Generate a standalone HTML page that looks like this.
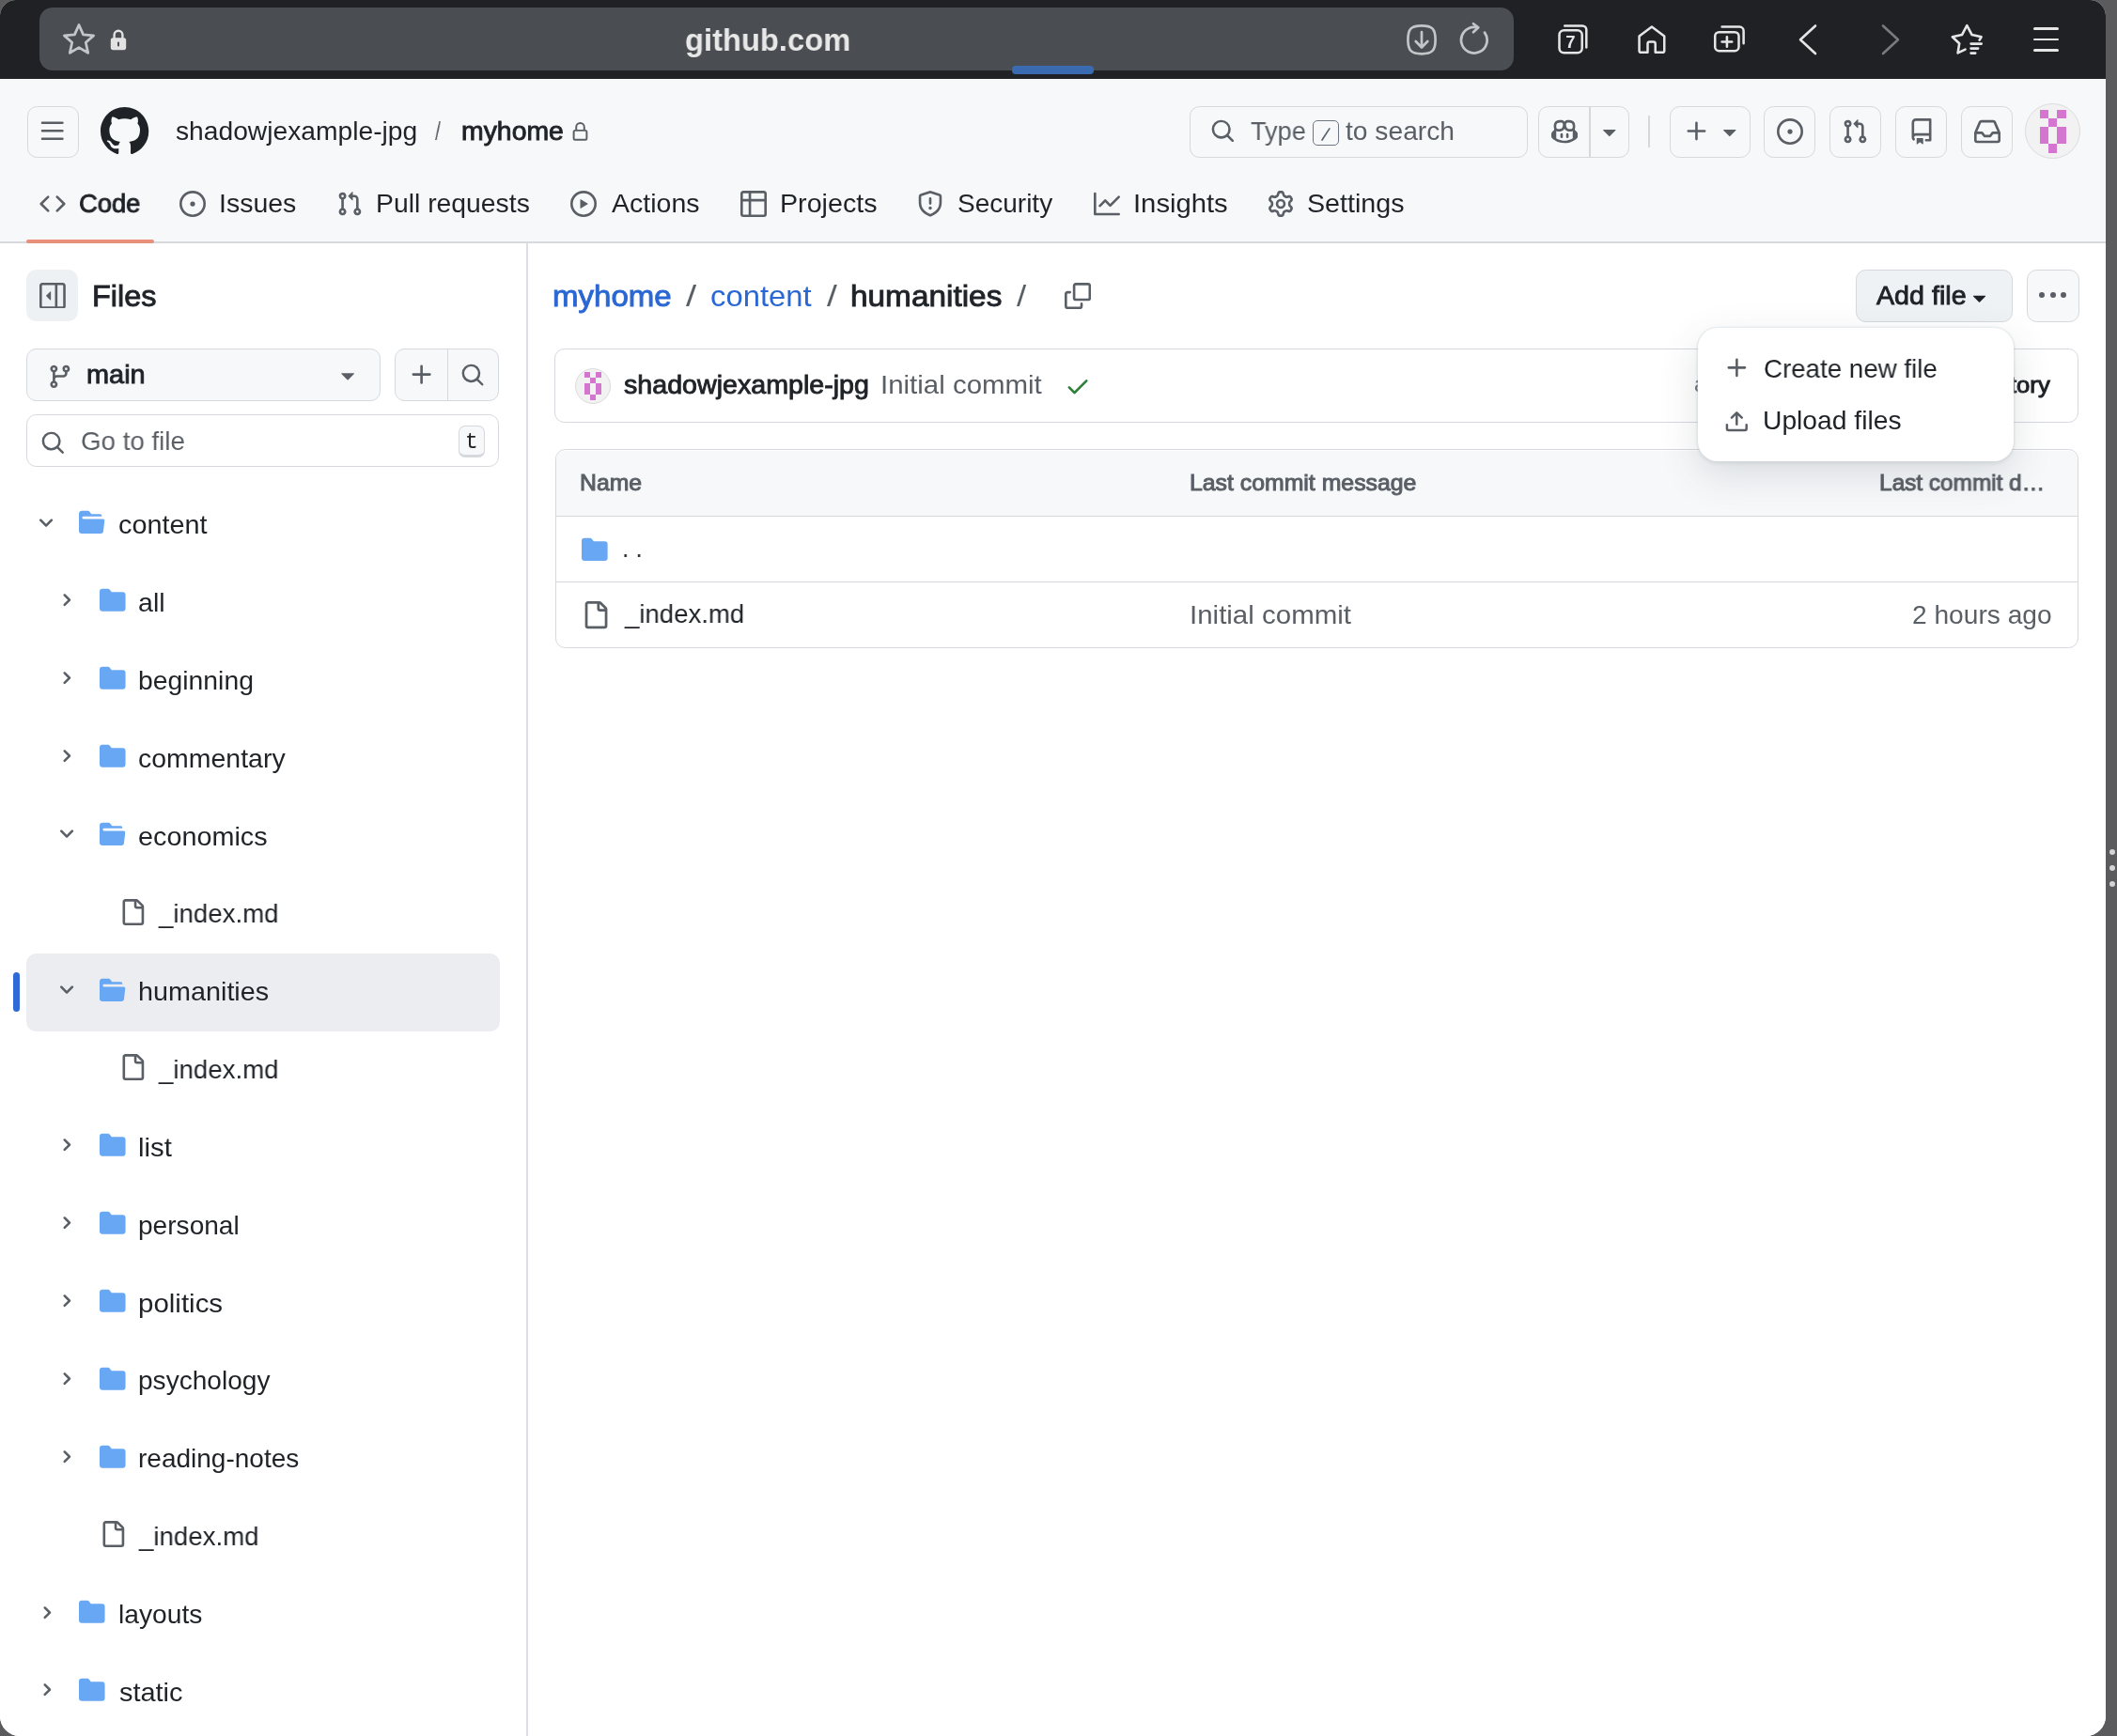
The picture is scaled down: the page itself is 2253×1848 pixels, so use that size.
<!DOCTYPE html>
<html><head><meta charset="utf-8"><style>
html,body{margin:0;padding:0}
body{width:2253px;height:1848px;overflow:hidden;background:#5b5b5d;position:relative;font-family:"Liberation Sans",sans-serif}
#frame{position:absolute;left:0;top:0;width:2241px;height:1848px;border-radius:17px 17px 21px 21px;overflow:hidden;background:#fff}
</style></head><body>
<div id="frame">
<div style='position:absolute;left:0.00px;top:0.00px;width:2241.00px;height:83.50px;background:#1f2125'></div><div style='position:absolute;left:42.00px;top:8.00px;width:1569.00px;height:67.00px;background:#4a4d51;border-radius:14px'></div><svg style='position:absolute;left:62px;top:21px' width='44' height='42' viewBox='0 0 44 42'><path d='M22 5.5 L26.6 15.9 L37.6 16.9 L29.3 24.3 L31.7 35.3 L22 29.6 L12.3 35.3 L14.7 24.3 L6.4 16.9 L17.4 15.9 Z' fill='none' stroke='#c3c5c8' stroke-width='2.8' stroke-linejoin='round'/></svg><svg style='position:absolute;left:117px;top:30px' width='18' height='24' viewBox='0 0 18 24'><path d='M4.6 11 V7.2 a4.4 4.4 0 0 1 8.8 0 V11' fill='none' stroke='#e2e2e2' stroke-width='2.4'/><rect x='0.8' y='10.2' width='16.4' height='13' rx='2.6' fill='#e2e2e2'/><rect x='8' y='14.5' width='2' height='5' rx='1' fill='#4a4d52'/></svg><svg style='position:absolute;left:1496px;top:25px' width='34' height='35' viewBox='0 0 34 35'><path d='M17 2.4 C28 2.4 31.6 5.5 31.6 17.2 C31.6 29 28 32.3 17 32.3 C6 32.3 2.4 29 2.4 17.2 C2.4 5.5 6 2.4 17 2.4Z' fill='none' stroke='#c3c6c9' stroke-width='2.7'/><path d='M17 9 V25.3 M10.7 19 L17 25.5 L23.3 19' fill='none' stroke='#c3c6c9' stroke-width='2.7' stroke-linecap='round' stroke-linejoin='round'/></svg><svg style='position:absolute;left:1553px;top:23px' width='34' height='36' viewBox='0 0 34 36'><path d='M27 11.6 A13.8 13.8 0 1 1 15.9 5.9 L19.5 6.1' fill='none' stroke='#c3c6c9' stroke-width='2.7' stroke-linecap='round'/><path d='M15 2.2 L20.3 6.3 L15 11.3' fill='none' stroke='#c3c6c9' stroke-width='2.7' stroke-linecap='round' stroke-linejoin='round'/></svg><div style='position:absolute;left:1076.70px;top:70.40px;width:87.30px;height:8.20px;background:#3a6bb0;border-radius:4px'></div><svg style='position:absolute;left:1656px;top:25px;will-change:transform' width='36' height='35' viewBox='0 0 36 35'><path d='M9.2 2.4 H28 a4.3 4.3 0 0 1 4.3 4.3 V25.6' fill='none' stroke='#e6e6e6' stroke-width='2.5' stroke-linecap='round'/><rect x='3.5' y='7.2' width='24.2' height='24.1' rx='5' fill='none' stroke='#e6e6e6' stroke-width='2.5'/><text x='15.4' y='26.1' font-family='Liberation Sans' font-weight='700' font-size='18.5' fill='#e6e6e6' text-anchor='middle'>7</text></svg><svg style='position:absolute;left:1741px;top:25px' width='34' height='34' viewBox='0 0 34 34'><path d='M3.55 13.6 L16.9 3.45 L30.25 13.6 V28.9 a1.85 1.85 0 0 1 -1.85 1.85 H20.7 V21.5 a2.1 2.1 0 0 0 -2.1 -2.1 H14.6 a2.1 2.1 0 0 0 -2.1 2.1 V30.75 H5.4 a1.85 1.85 0 0 1 -1.85 -1.85 Z' fill='none' stroke='#e6e6e6' stroke-width='2.5' stroke-linejoin='round'/></svg><svg style='position:absolute;left:1822px;top:25px' width='38' height='33' viewBox='0 0 38 33'><path d='M10.6 3.6 H29.3 a4.3 4.3 0 0 1 4.3 4.3 V21.3' fill='none' stroke='#e6e6e6' stroke-width='2.5' stroke-linecap='round'/><rect x='3.2' y='9.2' width='25.3' height='20' rx='4.3' fill='none' stroke='#e6e6e6' stroke-width='2.5'/><path d='M15.9 14.2 V24.8 M10.6 19.5 H21.2' stroke='#e6e6e6' stroke-width='2.6' stroke-linecap='round'/></svg><svg style='position:absolute;left:1912px;top:25px' width='24' height='35' viewBox='0 0 24 35'><path d='M20 2.5 L4 17.2 L20 32' fill='none' stroke='#e6e6e6' stroke-width='2.6' stroke-linecap='round' stroke-linejoin='round'/></svg><svg style='position:absolute;left:2000px;top:25px' width='24' height='35' viewBox='0 0 24 35'><path d='M4 2.5 L20 17.2 L4 32' fill='none' stroke='#7a7b7e' stroke-width='2.6' stroke-linecap='round' stroke-linejoin='round'/></svg><svg style='position:absolute;left:2075px;top:24px' width='38' height='36' viewBox='0 0 38 36'><path d='M16.5 28.6 L8.6 32.4 L10.2 22.3 L2.8 15.3 L13 13.1 L18.3 3.2 L23.6 13.1 L33.6 15.3 L31.6 18.6' fill='none' stroke='#e6e6e6' stroke-width='2.6' stroke-linejoin='round' stroke-linecap='round'/><path d='M22.6 22.6 H33.7 M22.6 27.6 H30.1 M22.6 32.6 H27.2' stroke='#e6e6e6' stroke-width='2.7' stroke-linecap='round'/></svg><div style='position:absolute;left:2164.30px;top:28.95px;width:26.60px;height:2.90px;background:#e6e6e6;border-radius:2px'></div><div style='position:absolute;left:2164.30px;top:40.55px;width:26.60px;height:2.90px;background:#e6e6e6;border-radius:2px'></div><div style='position:absolute;left:2164.30px;top:51.95px;width:26.60px;height:2.90px;background:#e6e6e6;border-radius:2px'></div><div style='position:absolute;left:0.00px;top:83.50px;width:2241.00px;height:173.50px;background:#f6f8fa'></div><div style='position:absolute;left:0.00px;top:257.00px;width:2241.00px;height:2.00px;background:#d6d9dd'></div><div style='position:absolute;left:28.50px;top:112.50px;width:55.00px;height:55.00px;box-sizing:border-box;border:1.75px solid #d5d8dc;border-radius:10.5px;background:transparent;'></div><svg style='position:absolute;left:42.29px;top:126.07px;' width='27.42' height='27.42' viewBox='0 0 16 16' fill='#5a5f66'><path d='M1 2.75A.75.75 0 0 1 1.75 2h12.5a.75.75 0 0 1 0 1.5H1.75A.75.75 0 0 1 1 2.75Zm0 5A.75.75 0 0 1 1.75 7h12.5a.75.75 0 0 1 0 1.5H1.75A.75.75 0 0 1 1 7.75ZM1.75 12h12.5a.75.75 0 0 1 0 1.5H1.75a.75.75 0 0 1 0-1.5Z'/></svg><svg style='position:absolute;left:107.48px;top:114.22px;' width='51.25' height='51.25' viewBox='0 0 16 16' fill='#1f2328'><path d='M8 0c4.42 0 8 3.58 8 8a8.013 8.013 0 0 1-5.45 7.59c-.4.08-.55-.17-.55-.38 0-.27.01-1.13.01-2.2 0-.75-.25-1.23-.54-1.48 1.78-.2 3.65-.88 3.65-3.95 0-.88-.31-1.59-.82-2.15.08-.2.36-1.02-.08-2.12 0 0-.67-.22-2.2.82-.64-.18-1.32-.27-2-.27-.68 0-1.36.09-2 .27-1.53-1.03-2.2-.82-2.2-.82-.44 1.1-.16 1.92-.08 2.12-.51.56-.82 1.28-.82 2.15 0 3.06 1.86 3.75 3.64 3.95-.23.2-.44.55-.51 1.07-.46.21-1.61.55-2.33-.66-.15-.24-.6-.83-1.23-.82-.67.01-.27.38.01.53.34.19.73.9.82 1.13.16.45.68 1.31 2.69.94 0 .67.01 1.3.01 1.49 0 .21-.15.45-.55.38A7.995 7.995 0 0 1 0 8c0-4.42 3.58-8 8-8Z'/></svg><svg style='position:absolute;left:607.24px;top:129.74px;' width='21.03' height='21.03' viewBox='0 0 16 16' fill='#5a5f66'><path d='M4 4a4 4 0 0 1 8 0v2h.25c.966 0 1.75.784 1.75 1.75v5.5A1.75 1.75 0 0 1 12.25 15h-8.5A1.75 1.75 0 0 1 2 13.25v-5.5C2 6.784 2.784 6 3.75 6H4Zm8.25 3.5h-8.5a.25.25 0 0 0-.25.25v5.5c0 .138.112.25.25.25h8.5a.25.25 0 0 0 .25-.25v-5.5a.25.25 0 0 0-.25-.25ZM10.5 6V4a2.5 2.5 0 1 0-5 0v2Z'/></svg><div style='position:absolute;left:1266.00px;top:112.50px;width:360.00px;height:55.00px;box-sizing:border-box;border:1.75px solid #d5d8dc;border-radius:10.5px;background:transparent;'></div><svg style='position:absolute;left:1287.95px;top:126.00px;' width='26.76' height='26.76' viewBox='0 0 16 16' fill='#5a5f66'><path d='M10.68 11.74a6 6 0 0 1-7.922-8.982 6 6 0 0 1 8.982 7.922l3.04 3.04a.749.749 0 0 1-.326 1.275.749.749 0 0 1-.734-.215ZM11.5 7a4.499 4.499 0 1 0-8.997 0A4.499 4.499 0 0 0 11.5 7Z'/></svg><div style='position:absolute;left:1397.00px;top:128.20px;width:27.80px;height:27.10px;box-sizing:border-box;border:1.5px solid #6e7781;border-radius:5px'></div><svg style='position:absolute;left:1397px;top:128px' width='28' height='27' viewBox='0 0 28 27'><path d='M10 21 L17.9 8.9' stroke='#59636e' stroke-width='1.7' stroke-linecap='round'/></svg><div style='position:absolute;left:1637.30px;top:112.50px;width:97.20px;height:55.00px;box-sizing:border-box;border:1.75px solid #d5d8dc;border-radius:10.5px;background:transparent;'></div><div style='position:absolute;left:1691.20px;top:112.50px;width:1.80px;height:55.00px;background:#d5d8dc'></div><svg style='position:absolute;left:1650.73px;top:126.05px;' width='28.04' height='28.04' viewBox='0 0 16 16' fill='#5a5f66'><path d='M7.998 15.035c-4.562 0-7.873-2.914-7.998-3.749V9.338c.085-.628.677-1.686 1.588-2.065.013-.07.024-.143.036-.218.029-.183.06-.384.126-.612-.201-.508-.254-1.084-.254-1.656 0-.87.128-1.769.693-2.484.579-.733 1.494-1.124 2.724-1.261 1.206-.134 2.262.034 2.944.765.05.053.096.108.139.165.044-.057.094-.112.143-.165.682-.731 1.738-.899 2.944-.765 1.23.137 2.145.528 2.724 1.261.566.715.693 1.614.693 2.484 0 .572-.053 1.148-.254 1.656.066.228.098.429.126.612.012.076.024.148.037.218.924.385 1.522 1.471 1.591 2.095v1.872c0 .766-3.351 3.795-8.002 3.795Zm0-1.485c2.28 0 4.584-1.11 5.002-1.433V7.862l-.023-.116c-.49.21-1.075.291-1.727.291-1.146 0-2.059-.327-2.71-.991A3.222 3.222 0 0 1 8 6.303a3.24 3.24 0 0 1-.544.743c-.65.664-1.563.991-2.71.991-.652 0-1.236-.081-1.727-.291l-.023.116v4.255c.419.323 2.722 1.433 5.002 1.433ZM6.762 2.83c-.193-.206-.637-.413-1.682-.297-1.019.113-1.479.404-1.713.7-.247.312-.369.789-.369 1.554 0 .793.129 1.171.308 1.371.162.181.519.379 1.442.379.853 0 1.339-.235 1.638-.54.315-.322.527-.827.617-1.553.117-.935-.037-1.395-.241-1.614Zm4.155-.297c-1.044-.116-1.488.091-1.681.297-.204.219-.359.679-.242 1.614.091.726.303 1.231.618 1.553.299.305.784.54 1.638.54.922 0 1.28-.198 1.442-.379.179-.2.308-.578.308-1.371 0-.765-.123-1.242-.37-1.554-.233-.296-.693-.587-1.713-.7Z M6.25 9.037a.75.75 0 0 1 .75.75v1.501a.75.75 0 0 1-1.5 0V9.787a.75.75 0 0 1 .75-.75Zm4.25.75v1.501a.75.75 0 0 1-1.5 0V9.787a.75.75 0 0 1 1.5 0Z'/></svg><svg style='position:absolute;left:1697.88px;top:125.12px;' width='29.55' height='29.55' viewBox='0 0 16 16' fill='#5a5f66'><path d='m4.427 7.427 3.396 3.396a.25.25 0 0 0 .354 0l3.396-3.396A.25.25 0 0 0 11.396 7H4.604a.25.25 0 0 0-.177.427Z'/></svg><div style='position:absolute;left:1754.00px;top:123.30px;width:2.00px;height:34.00px;background:#d5d8dc'></div><div style='position:absolute;left:1777.00px;top:112.50px;width:85.50px;height:55.00px;box-sizing:border-box;border:1.75px solid #d5d8dc;border-radius:10.5px;background:transparent;'></div><svg style='position:absolute;left:1792.11px;top:126.16px;' width='27.76' height='27.76' viewBox='0 0 16 16' fill='#5a5f66'><path d='M7.75 2a.75.75 0 0 1 .75.75V7h4.25a.75.75 0 0 1 0 1.5H8.5v4.25a.75.75 0 0 1-1.5 0V8.5H2.75a.75.75 0 0 1 0-1.5H7V2.75A.75.75 0 0 1 7.75 2Z'/></svg><svg style='position:absolute;left:1825.88px;top:125.12px;' width='29.55' height='29.55' viewBox='0 0 16 16' fill='#5a5f66'><path d='m4.427 7.427 3.396 3.396a.25.25 0 0 0 .354 0l3.396-3.396A.25.25 0 0 0 11.396 7H4.604a.25.25 0 0 0-.177.427Z'/></svg><div style='position:absolute;left:1877.00px;top:112.50px;width:55.40px;height:55.00px;box-sizing:border-box;border:1.75px solid #d5d8dc;border-radius:10.5px;background:transparent;'></div><svg style='position:absolute;left:1890.70px;top:126.00px;' width='28.00' height='28.00' viewBox='0 0 16 16' fill='#5a5f66'><path d='M8 9.5a1.5 1.5 0 1 0 0-3 1.5 1.5 0 0 0 0 3Z M8 0a8 8 0 1 1 0 16A8 8 0 0 1 8 0ZM1.5 8a6.5 6.5 0 1 0 13 0 6.5 6.5 0 0 0-13 0Z'/></svg><div style='position:absolute;left:1947.30px;top:112.50px;width:54.90px;height:55.00px;box-sizing:border-box;border:1.75px solid #d5d8dc;border-radius:10.5px;background:transparent;'></div><svg style='position:absolute;left:1960.31px;top:126.35px;' width='28.00' height='28.00' viewBox='0 0 16 16' fill='#5a5f66'><path d='M1.5 3.25a2.25 2.25 0 1 1 3 2.122v5.256a2.251 2.251 0 1 1-1.5 0V5.372A2.25 2.25 0 0 1 1.5 3.25Zm5.677-.177L9.573.677A.25.25 0 0 1 10 .854V2.5h1A2.5 2.5 0 0 1 13.5 5v5.628a2.251 2.251 0 1 1-1.5 0V5a1 1 0 0 0-1-1h-1v1.646a.25.25 0 0 1-.427.177L7.177 3.427a.25.25 0 0 1 0-.354ZM3.75 2.5a.75.75 0 1 0 0 1.5.75.75 0 0 0 0-1.5Zm0 9.5a.75.75 0 1 0 0 1.5.75.75 0 0 0 0-1.5Zm8.25.75a.75.75 0 1 0 1.5 0 .75.75 0 0 0-1.5 0Z'/></svg><div style='position:absolute;left:2017.40px;top:112.50px;width:54.90px;height:55.00px;box-sizing:border-box;border:1.75px solid #d5d8dc;border-radius:10.5px;background:transparent;'></div><svg style='position:absolute;left:2030.85px;top:126.22px;' width='28.00' height='28.00' viewBox='0 0 16 16' fill='#5a5f66'><path d='M2 2.5A2.5 2.5 0 0 1 4.5 0h8.75a.75.75 0 0 1 .75.75v12.5a.75.75 0 0 1-.75.75h-2.5a.75.75 0 0 1 0-1.5h1.75v-2h-8a1 1 0 0 0-.714 1.7.75.75 0 1 1-1.072 1.05A2.495 2.495 0 0 1 2 11.5Zm10.5-1h-8a1 1 0 0 0-1 1v6.708A2.486 2.486 0 0 1 4.5 9h8ZM5 12.25a.25.25 0 0 1 .25-.25h3.5a.25.25 0 0 1 .25.25v3.25a.25.25 0 0 1-.4.2l-1.45-1.087a.249.249 0 0 0-.3 0L5.4 15.7a.25.25 0 0 1-.4-.2Z'/></svg><div style='position:absolute;left:2087.40px;top:112.50px;width:54.90px;height:55.00px;box-sizing:border-box;border:1.75px solid #d5d8dc;border-radius:10.5px;background:transparent;'></div><svg style='position:absolute;left:2100.85px;top:126.00px;' width='28.00' height='28.00' viewBox='0 0 16 16' fill='#5a5f66'><path d='M2.8 2.06A1.75 1.75 0 0 1 4.41 1h7.18c.7 0 1.333.417 1.61 1.06l2.74 6.395c.04.093.06.194.06.295v4.5A1.75 1.75 0 0 1 14.25 15H1.75A1.75 1.75 0 0 1 0 13.25v-4.5c0-.101.02-.202.06-.295Zm1.61.44a.25.25 0 0 0-.23.152L1.887 8H4.75a.75.75 0 0 1 .6.3L6.625 10h2.75l1.275-1.7a.75.75 0 0 1 .6-.3h2.863L11.82 2.652a.25.25 0 0 0-.23-.152Zm10.09 7h-2.875l-1.275 1.7a.75.75 0 0 1-.6.3h-3.5a.75.75 0 0 1-.6-.3L4.375 9.5H1.5v3.75c0 .138.112.25.25.25h12.5a.25.25 0 0 0 .25-.25Z'/></svg><div style='position:absolute;left:2155.45px;top:110.35px;width:58.50px;height:58.50px;box-sizing:border-box;background:#f2f2f2;border:1.5px solid #dcdcdc;border-radius:50%'></div><div style='position:absolute;left:2170.86px;top:116.53px;width:9.23px;height:9.23px;background:#d476cf'></div><div style='position:absolute;left:2189.31px;top:116.53px;width:9.23px;height:9.23px;background:#d476cf'></div><div style='position:absolute;left:2180.09px;top:125.76px;width:9.23px;height:9.23px;background:#d476cf'></div><div style='position:absolute;left:2170.86px;top:134.99px;width:9.23px;height:9.23px;background:#d476cf'></div><div style='position:absolute;left:2189.31px;top:134.99px;width:9.23px;height:9.23px;background:#d476cf'></div><div style='position:absolute;left:2170.86px;top:144.21px;width:9.23px;height:9.23px;background:#d476cf'></div><div style='position:absolute;left:2189.31px;top:144.21px;width:9.23px;height:9.23px;background:#d476cf'></div><div style='position:absolute;left:2180.09px;top:153.44px;width:9.23px;height:9.23px;background:#d476cf'></div><svg style='position:absolute;left:41.65px;top:202.80px;' width='28.00' height='28.00' viewBox='0 0 16 16' fill='#5a5f66'><path d='m11.28 3.22 4.25 4.25a.75.75 0 0 1 0 1.06l-4.25 4.25a.749.749 0 0 1-1.275-.326.749.749 0 0 1 .215-.734L13.94 8l-3.72-3.72a.749.749 0 0 1 .326-1.275.749.749 0 0 1 .734.215Zm-6.56 0a.751.751 0 0 1 1.042.018.751.751 0 0 1 .018 1.042L2.06 8l3.72 3.72a.749.749 0 0 1-.326 1.275.749.749 0 0 1-.734-.215L.47 8.53a.75.75 0 0 1 0-1.06Z'/></svg><svg style='position:absolute;left:190.90px;top:202.80px;' width='28.00' height='28.00' viewBox='0 0 16 16' fill='#5a5f66'><path d='M8 9.5a1.5 1.5 0 1 0 0-3 1.5 1.5 0 0 0 0 3Z M8 0a8 8 0 1 1 0 16A8 8 0 0 1 8 0ZM1.5 8a6.5 6.5 0 1 0 13 0 6.5 6.5 0 0 0-13 0Z'/></svg><svg style='position:absolute;left:358.06px;top:203.15px;' width='28.00' height='28.00' viewBox='0 0 16 16' fill='#5a5f66'><path d='M1.5 3.25a2.25 2.25 0 1 1 3 2.122v5.256a2.251 2.251 0 1 1-1.5 0V5.372A2.25 2.25 0 0 1 1.5 3.25Zm5.677-.177L9.573.677A.25.25 0 0 1 10 .854V2.5h1A2.5 2.5 0 0 1 13.5 5v5.628a2.251 2.251 0 1 1-1.5 0V5a1 1 0 0 0-1-1h-1v1.646a.25.25 0 0 1-.427.177L7.177 3.427a.25.25 0 0 1 0-.354ZM3.75 2.5a.75.75 0 1 0 0 1.5.75.75 0 0 0 0-1.5Zm0 9.5a.75.75 0 1 0 0 1.5.75.75 0 0 0 0-1.5Zm8.25.75a.75.75 0 1 0 1.5 0 .75.75 0 0 0-1.5 0Z'/></svg><svg style='position:absolute;left:606.75px;top:202.80px;' width='28.00' height='28.00' viewBox='0 0 16 16' fill='#5a5f66'><path d='M8 0a8 8 0 1 1 0 16A8 8 0 0 1 8 0ZM1.5 8a6.5 6.5 0 1 0 13 0 6.5 6.5 0 0 0-13 0Zm4.879-2.773 4.264 2.559a.25.25 0 0 1 0 .428l-4.264 2.559A.25.25 0 0 1 6 10.559V5.442a.25.25 0 0 1 .379-.215Z'/></svg><svg style='position:absolute;left:787.80px;top:202.80px;' width='28.00' height='28.00' viewBox='0 0 16 16' fill='#5a5f66'><path d='M0 1.75C0 .784.784 0 1.75 0h12.5C15.216 0 16 .784 16 1.75v12.5A1.75 1.75 0 0 1 14.25 16H1.75A1.75 1.75 0 0 1 0 14.25ZM6.5 6.5v8h7.75a.25.25 0 0 0 .25-.25V6.5Zm8-1.5V1.75a.25.25 0 0 0-.25-.25H6.5V5Zm-13 1.5v7.75c0 .138.112.25.25.25H5v-8ZM5 5V1.5H1.75a.25.25 0 0 0-.25.25V5Z'/></svg><svg style='position:absolute;left:975.65px;top:203.06px;' width='28.00' height='28.00' viewBox='0 0 16 16' fill='#5a5f66'><path d='M7.467.133a1.748 1.748 0 0 1 1.066 0l5.25 1.68A1.75 1.75 0 0 1 15 3.48V7c0 1.566-.32 3.182-1.303 4.682-.983 1.498-2.585 2.813-5.032 3.855a1.697 1.697 0 0 1-1.33 0c-2.447-1.042-4.049-2.357-5.032-3.855C1.32 10.182 1 8.566 1 7V3.48a1.755 1.755 0 0 1 1.217-1.667Zm.61 1.429a.25.25 0 0 0-.153 0l-5.25 1.68a.25.25 0 0 0-.174.238V7c0 1.358.275 2.666 1.057 3.86.784 1.194 2.121 2.34 4.366 3.297a.196.196 0 0 0 .154 0c2.245-.956 3.582-2.104 4.366-3.298C13.225 9.666 13.5 8.36 13.5 7V3.48a.251.251 0 0 0-.174-.237l-5.25-1.68ZM8.75 4.75v3a.75.75 0 0 1-1.5 0v-3a.75.75 0 0 1 1.5 0ZM9 10.5a1 1 0 1 1-2 0 1 1 0 0 1 2 0Z'/></svg><svg style='position:absolute;left:1163.80px;top:202.80px;' width='28.00' height='28.00' viewBox='0 0 16 16' fill='#5a5f66'><path d='M1.5 1.75V13.5h13.75a.75.75 0 0 1 0 1.5H.75a.75.75 0 0 1-.75-.75V1.75a.75.75 0 0 1 1.5 0Zm14.28 2.53-5.25 5.25a.75.75 0 0 1-1.06 0L7 7.06 4.28 9.78a.751.751 0 0 1-1.042-.018.751.751 0 0 1-.018-1.042l3.25-3.25a.75.75 0 0 1 1.06 0L10 7.94l4.72-4.72a.751.751 0 0 1 1.042.018.751.751 0 0 1 .018 1.042Z'/></svg><svg style='position:absolute;left:1348.50px;top:202.80px;' width='28.00' height='28.00' viewBox='0 0 16 16' fill='#5a5f66'><path d='M8 0a8.2 8.2 0 0 1 .701.031C9.444.095 9.99.645 10.16 1.29l.288 1.107c.018.066.079.158.212.224.231.114.454.243.668.386.123.082.233.09.299.071l1.103-.303c.644-.176 1.392.021 1.82.63.27.385.506.792.704 1.218.315.675.111 1.422-.364 1.891l-.814.806c-.049.048-.098.147-.088.294.016.257.016.515 0 .772-.01.147.038.246.088.294l.814.806c.475.469.679 1.216.364 1.891a7.977 7.977 0 0 1-.704 1.217c-.428.61-1.176.807-1.82.63l-1.102-.302c-.067-.019-.177-.011-.3.071a5.909 5.909 0 0 1-.668.386c-.133.066-.194.158-.211.224l-.29 1.106c-.168.646-.715 1.196-1.458 1.26a8.006 8.006 0 0 1-1.402 0c-.743-.064-1.289-.614-1.458-1.26l-.289-1.106c-.018-.066-.079-.158-.212-.224a5.738 5.738 0 0 1-.668-.386c-.123-.082-.233-.09-.299-.071l-1.103.303c-.644.176-1.392-.021-1.82-.63a8.12 8.12 0 0 1-.704-1.218c-.315-.675-.111-1.422.363-1.891l.815-.806c.05-.048.098-.147.088-.294a6.214 6.214 0 0 1 0-.772c.01-.147-.038-.246-.088-.294l-.815-.806C.635 6.045.431 5.298.746 4.623a7.92 7.92 0 0 1 .704-1.217c.428-.61 1.176-.807 1.82-.63l1.102.302c.067.019.177.011.3-.071.214-.143.437-.272.668-.386.133-.066.194-.158.211-.224l.29-1.106C6.009.645 6.556.095 7.299.03 7.53.01 7.764 0 8 0Zm-.571 1.525c-.036.003-.108.036-.137.146l-.289 1.105c-.147.561-.549.967-.998 1.189-.173.086-.34.183-.5.29-.417.278-.97.423-1.529.27l-1.103-.303c-.109-.03-.175.016-.195.045-.22.312-.412.644-.573.99-.014.031-.021.11.059.19l.815.806c.411.406.562.957.53 1.456a4.709 4.709 0 0 0 0 .582c.032.499-.119 1.05-.53 1.456l-.815.806c-.081.08-.073.159-.059.19.162.346.353.677.573.989.02.03.085.076.195.046l1.102-.303c.56-.153 1.113-.008 1.53.27.161.107.328.204.501.29.447.222.85.629.997 1.189l.289 1.105c.029.109.101.143.137.146a6.6 6.6 0 0 0 1.142 0c.036-.003.108-.036.137-.146l.289-1.105c.147-.561.549-.967.998-1.189.173-.086.34-.183.5-.29.417-.278.97-.423 1.529-.27l1.103.303c.109.029.175-.016.195-.045.22-.313.411-.644.573-.99.014-.031.021-.11-.059-.19l-.815-.806c-.411-.406-.562-.957-.53-1.456a4.709 4.709 0 0 0 0-.582c-.032-.499.119-1.05.53-1.456l.815-.806c.081-.08.073-.159.059-.19a6.464 6.464 0 0 0-.573-.989c-.02-.03-.085-.076-.195-.046l-1.102.303c-.56.153-1.113.008-1.53-.27a4.44 4.44 0 0 0-.501-.29c-.447-.222-.85-.629-.997-1.189l-.289-1.105c-.029-.11-.101-.143-.137-.146a6.6 6.6 0 0 0-1.142 0ZM11 8a3 3 0 1 1-6 0 3 3 0 0 1 6 0ZM9.5 8a1.5 1.5 0 1 0-3.001.001A1.5 1.5 0 0 0 9.5 8Z'/></svg><div style='position:absolute;left:27.70px;top:255.00px;width:136.10px;height:4.00px;background:#e8907a;border-radius:2px'></div><div style='position:absolute;left:0.00px;top:259.00px;width:2241.00px;height:1589.00px;background:#ffffff'></div><div style='position:absolute;left:560.00px;top:259.00px;width:2.00px;height:1589.00px;background:#dcdfe3'></div><div style='position:absolute;left:28.30px;top:287.30px;width:55.20px;height:55.20px;background:#eef1f4;border-radius:10.5px'></div><svg style='position:absolute;left:41.93px;top:300.57px;' width='27.85' height='27.85' viewBox='0 0 16 16' fill='#5a5f66'><path d='M4.177 7.823 6.573 5.427A.25.25 0 0 1 7 5.604v4.792a.25.25 0 0 1-.427.177L4.177 8.177a.25.25 0 0 1 0-.354Z M1.75 0h12.5C15.216 0 16 .784 16 1.75v12.5A1.75 1.75 0 0 1 14.25 16H1.75A1.75 1.75 0 0 1 0 14.25V1.75C0 .784.784 0 1.75 0ZM1.5 1.75v12.5c0 .138.112.25.25.25H9.5v-13H1.75a.25.25 0 0 0-.25.25ZM11 14.5h3.25a.25.25 0 0 0 .25-.25V1.75a.25.25 0 0 0-.25-.25H11Z'/></svg><div style='position:absolute;left:28.00px;top:371.30px;width:377.00px;height:55.40px;box-sizing:border-box;border:1.75px solid #d5d8dc;border-radius:10.5px;background:#f6f8fa;'></div><svg style='position:absolute;left:50.01px;top:387.06px;' width='27.77' height='27.77' viewBox='0 0 16 16' fill='#5a5f66'><path d='M9.5 3.25a2.25 2.25 0 1 1 3 2.122V6A2.5 2.5 0 0 1 10 8.5H6a1 1 0 0 0-1 1v1.128a2.251 2.251 0 1 1-1.5 0V5.372a2.25 2.25 0 1 1 1.5 0v1.836A2.493 2.493 0 0 1 6 7h4a1 1 0 0 0 1-1v-.628A2.25 2.25 0 0 1 9.5 3.25Zm-6 0a.75.75 0 1 0 1.5 0 .75.75 0 0 0-1.5 0Zm8.25-.75a.75.75 0 1 0 0 1.5.75.75 0 0 0 0-1.5ZM4.25 12a.75.75 0 1 0 0 1.5.75.75 0 0 0 0-1.5Z'/></svg><svg style='position:absolute;left:354.69px;top:383.50px;' width='30.22' height='30.22' viewBox='0 0 16 16' fill='#5a5f66'><path d='m4.427 7.427 3.396 3.396a.25.25 0 0 0 .354 0l3.396-3.396A.25.25 0 0 0 11.396 7H4.604a.25.25 0 0 0-.177.427Z'/></svg><div style='position:absolute;left:420.00px;top:371.30px;width:111.00px;height:55.40px;box-sizing:border-box;border:1.75px solid #d5d8dc;border-radius:10.5px;background:#f6f8fa;'></div><div style='position:absolute;left:475.70px;top:371.30px;width:1.80px;height:55.40px;background:#d5d8dc'></div><svg style='position:absolute;left:434.79px;top:385.29px;' width='28.10' height='28.10' viewBox='0 0 16 16' fill='#5a5f66'><path d='M7.75 2a.75.75 0 0 1 .75.75V7h4.25a.75.75 0 0 1 0 1.5H8.5v4.25a.75.75 0 0 1-1.5 0V8.5H2.75a.75.75 0 0 1 0-1.5H7V2.75A.75.75 0 0 1 7.75 2Z'/></svg><svg style='position:absolute;left:490.04px;top:385.59px;' width='26.10' height='26.10' viewBox='0 0 16 16' fill='#5a5f66'><path d='M10.68 11.74a6 6 0 0 1-7.922-8.982 6 6 0 0 1 8.982 7.922l3.04 3.04a.749.749 0 0 1-.326 1.275.749.749 0 0 1-.734-.215ZM11.5 7a4.499 4.499 0 1 0-8.997 0A4.499 4.499 0 0 0 11.5 7Z'/></svg><div style='position:absolute;left:28.00px;top:441.30px;width:503.00px;height:55.30px;box-sizing:border-box;border:1.75px solid #d5d8dc;border-radius:10.5px;background:#ffffff;'></div><svg style='position:absolute;left:42.94px;top:458.04px;' width='26.59' height='26.59' viewBox='0 0 16 16' fill='#5a5f66'><path d='M10.68 11.74a6 6 0 0 1-7.922-8.982 6 6 0 0 1 8.982 7.922l3.04 3.04a.749.749 0 0 1-.326 1.275.749.749 0 0 1-.734-.215ZM11.5 7a4.499 4.499 0 1 0-8.997 0A4.499 4.499 0 0 0 11.5 7Z'/></svg><div style='position:absolute;left:487.90px;top:452.90px;width:28.50px;height:34.20px;box-sizing:border-box;border:1.5px solid #d5d8dc;border-bottom-width:3px;border-radius:7px;background:#f6f8fa'></div><svg style='position:absolute;left:39.02px;top:545.72px;' width='20.16' height='20.16' viewBox='0 0 12 12' fill='#5a5f66'><path d='M6 8.825c-.2 0-.4-.1-.5-.2l-3.5-3.5c-.3-.3-.3-.8 0-1.1.3-.3.8-.3 1.1 0l2.9 2.9 2.9-2.9c.3-.3.8-.3 1.1 0 .3.3.3.8 0 1.1l-3.5 3.5c-.1.2-.3.2-.5.2Z'/></svg><svg style='position:absolute;left:84.16px;top:542.45px;' width='27.75' height='27.75' viewBox='0 0 16 16' fill='#68a7f4'><path d='M.513 1.513A1.75 1.75 0 0 1 1.75 1h3.5c.55 0 1.07.26 1.4.7l.9 1.2a.25.25 0 0 0 .2.1H13a1 1 0 0 1 1 1v.5H2.75a.75.75 0 0 0 0 1.5h11.978a1 1 0 0 1 .994 1.117L15 13.25A1.75 1.75 0 0 1 13.25 15H1.75A1.75 1.75 0 0 1 0 13.25V2.75c0-.464.184-.91.513-1.237Z'/></svg><svg style='position:absolute;left:61.23px;top:629.48px;' width='19.44' height='19.44' viewBox='0 0 12 12' fill='#5a5f66'><path d='M4.7 10c-.2 0-.4-.1-.5-.2-.3-.3-.3-.8 0-1.1L6.9 6 4.2 3.3c-.3-.3-.3-.8 0-1.1.3-.3.8-.3 1.1 0l3.3 3.2c.3.3.3.8 0 1.1L5.3 9.7c-.2.2-.4.3-.6.3Z'/></svg><svg style='position:absolute;left:105.97px;top:625.39px;' width='27.56' height='27.56' viewBox='0 0 16 16' fill='#68a7f4'><path d='M1.75 1A1.75 1.75 0 0 0 0 2.75v10.5C0 14.216.784 15 1.75 15h12.5A1.75 1.75 0 0 0 16 13.25v-8.5A1.75 1.75 0 0 0 14.25 3H7.5a.25.25 0 0 1-.2-.1l-.9-1.2C6.07 1.26 5.55 1 5 1H1.75Z'/></svg><svg style='position:absolute;left:61.23px;top:712.33px;' width='19.44' height='19.44' viewBox='0 0 12 12' fill='#5a5f66'><path d='M4.7 10c-.2 0-.4-.1-.5-.2-.3-.3-.3-.8 0-1.1L6.9 6 4.2 3.3c-.3-.3-.3-.8 0-1.1.3-.3.8-.3 1.1 0l3.3 3.2c.3.3.3.8 0 1.1L5.3 9.7c-.2.2-.4.3-.6.3Z'/></svg><svg style='position:absolute;left:105.97px;top:708.24px;' width='27.56' height='27.56' viewBox='0 0 16 16' fill='#68a7f4'><path d='M1.75 1A1.75 1.75 0 0 0 0 2.75v10.5C0 14.216.784 15 1.75 15h12.5A1.75 1.75 0 0 0 16 13.25v-8.5A1.75 1.75 0 0 0 14.25 3H7.5a.25.25 0 0 1-.2-.1l-.9-1.2C6.07 1.26 5.55 1 5 1H1.75Z'/></svg><svg style='position:absolute;left:61.23px;top:795.18px;' width='19.44' height='19.44' viewBox='0 0 12 12' fill='#5a5f66'><path d='M4.7 10c-.2 0-.4-.1-.5-.2-.3-.3-.3-.8 0-1.1L6.9 6 4.2 3.3c-.3-.3-.3-.8 0-1.1.3-.3.8-.3 1.1 0l3.3 3.2c.3.3.3.8 0 1.1L5.3 9.7c-.2.2-.4.3-.6.3Z'/></svg><svg style='position:absolute;left:105.97px;top:791.09px;' width='27.56' height='27.56' viewBox='0 0 16 16' fill='#68a7f4'><path d='M1.75 1A1.75 1.75 0 0 0 0 2.75v10.5C0 14.216.784 15 1.75 15h12.5A1.75 1.75 0 0 0 16 13.25v-8.5A1.75 1.75 0 0 0 14.25 3H7.5a.25.25 0 0 1-.2-.1l-.9-1.2C6.07 1.26 5.55 1 5 1H1.75Z'/></svg><svg style='position:absolute;left:60.72px;top:877.12px;' width='20.16' height='20.16' viewBox='0 0 12 12' fill='#5a5f66'><path d='M6 8.825c-.2 0-.4-.1-.5-.2l-3.5-3.5c-.3-.3-.3-.8 0-1.1.3-.3.8-.3 1.1 0l2.9 2.9 2.9-2.9c.3-.3.8-.3 1.1 0 .3.3.3.8 0 1.1l-3.5 3.5c-.1.2-.3.2-.5.2Z'/></svg><svg style='position:absolute;left:105.86px;top:873.85px;' width='27.75' height='27.75' viewBox='0 0 16 16' fill='#68a7f4'><path d='M.513 1.513A1.75 1.75 0 0 1 1.75 1h3.5c.55 0 1.07.26 1.4.7l.9 1.2a.25.25 0 0 0 .2.1H13a1 1 0 0 1 1 1v.5H2.75a.75.75 0 0 0 0 1.5h11.978a1 1 0 0 1 .994 1.117L15 13.25A1.75 1.75 0 0 1 13.25 15H1.75A1.75 1.75 0 0 1 0 13.25V2.75c0-.464.184-.91.513-1.237Z'/></svg><svg style='position:absolute;left:126.78px;top:956.58px;' width='28.00' height='28.00' viewBox='0 0 16 16' fill='#5a5f66'><path d='M2 1.75C2 .784 2.784 0 3.75 0h6.586c.464 0 .909.184 1.237.513l2.914 2.914c.329.328.513.773.513 1.237v9.586A1.75 1.75 0 0 1 13.25 16h-9.5A1.75 1.75 0 0 1 2 14.25Zm1.75-.25a.25.25 0 0 0-.25.25v12.5c0 .138.112.25.25.25h9.5a.25.25 0 0 0 .25-.25V6h-2.75A1.75 1.75 0 0 1 9 4.25V1.5Zm6.75.062V4.25c0 .138.112.25.25.25h2.688l-.011-.013-2.914-2.914-.013-.011Z'/></svg><div style='position:absolute;left:28.00px;top:1014.80px;width:503.80px;height:83.00px;background:#ebedf0;border-radius:10.5px'></div><div style='position:absolute;left:14.00px;top:1035.00px;width:7.00px;height:41.70px;background:#2f6bd6;border-radius:4px'></div><svg style='position:absolute;left:60.72px;top:1042.82px;' width='20.16' height='20.16' viewBox='0 0 12 12' fill='#5a5f66'><path d='M6 8.825c-.2 0-.4-.1-.5-.2l-3.5-3.5c-.3-.3-.3-.8 0-1.1.3-.3.8-.3 1.1 0l2.9 2.9 2.9-2.9c.3-.3.8-.3 1.1 0 .3.3.3.8 0 1.1l-3.5 3.5c-.1.2-.3.2-.5.2Z'/></svg><svg style='position:absolute;left:105.86px;top:1039.55px;' width='27.75' height='27.75' viewBox='0 0 16 16' fill='#68a7f4'><path d='M.513 1.513A1.75 1.75 0 0 1 1.75 1h3.5c.55 0 1.07.26 1.4.7l.9 1.2a.25.25 0 0 0 .2.1H13a1 1 0 0 1 1 1v.5H2.75a.75.75 0 0 0 0 1.5h11.978a1 1 0 0 1 .994 1.117L15 13.25A1.75 1.75 0 0 1 13.25 15H1.75A1.75 1.75 0 0 1 0 13.25V2.75c0-.464.184-.91.513-1.237Z'/></svg><svg style='position:absolute;left:126.78px;top:1122.28px;' width='28.00' height='28.00' viewBox='0 0 16 16' fill='#5a5f66'><path d='M2 1.75C2 .784 2.784 0 3.75 0h6.586c.464 0 .909.184 1.237.513l2.914 2.914c.329.328.513.773.513 1.237v9.586A1.75 1.75 0 0 1 13.25 16h-9.5A1.75 1.75 0 0 1 2 14.25Zm1.75-.25a.25.25 0 0 0-.25.25v12.5c0 .138.112.25.25.25h9.5a.25.25 0 0 0 .25-.25V6h-2.75A1.75 1.75 0 0 1 9 4.25V1.5Zm6.75.062V4.25c0 .138.112.25.25.25h2.688l-.011-.013-2.914-2.914-.013-.011Z'/></svg><svg style='position:absolute;left:61.23px;top:1209.43px;' width='19.44' height='19.44' viewBox='0 0 12 12' fill='#5a5f66'><path d='M4.7 10c-.2 0-.4-.1-.5-.2-.3-.3-.3-.8 0-1.1L6.9 6 4.2 3.3c-.3-.3-.3-.8 0-1.1.3-.3.8-.3 1.1 0l3.3 3.2c.3.3.3.8 0 1.1L5.3 9.7c-.2.2-.4.3-.6.3Z'/></svg><svg style='position:absolute;left:105.97px;top:1205.34px;' width='27.56' height='27.56' viewBox='0 0 16 16' fill='#68a7f4'><path d='M1.75 1A1.75 1.75 0 0 0 0 2.75v10.5C0 14.216.784 15 1.75 15h12.5A1.75 1.75 0 0 0 16 13.25v-8.5A1.75 1.75 0 0 0 14.25 3H7.5a.25.25 0 0 1-.2-.1l-.9-1.2C6.07 1.26 5.55 1 5 1H1.75Z'/></svg><svg style='position:absolute;left:61.23px;top:1292.28px;' width='19.44' height='19.44' viewBox='0 0 12 12' fill='#5a5f66'><path d='M4.7 10c-.2 0-.4-.1-.5-.2-.3-.3-.3-.8 0-1.1L6.9 6 4.2 3.3c-.3-.3-.3-.8 0-1.1.3-.3.8-.3 1.1 0l3.3 3.2c.3.3.3.8 0 1.1L5.3 9.7c-.2.2-.4.3-.6.3Z'/></svg><svg style='position:absolute;left:105.97px;top:1288.19px;' width='27.56' height='27.56' viewBox='0 0 16 16' fill='#68a7f4'><path d='M1.75 1A1.75 1.75 0 0 0 0 2.75v10.5C0 14.216.784 15 1.75 15h12.5A1.75 1.75 0 0 0 16 13.25v-8.5A1.75 1.75 0 0 0 14.25 3H7.5a.25.25 0 0 1-.2-.1l-.9-1.2C6.07 1.26 5.55 1 5 1H1.75Z'/></svg><svg style='position:absolute;left:61.23px;top:1375.13px;' width='19.44' height='19.44' viewBox='0 0 12 12' fill='#5a5f66'><path d='M4.7 10c-.2 0-.4-.1-.5-.2-.3-.3-.3-.8 0-1.1L6.9 6 4.2 3.3c-.3-.3-.3-.8 0-1.1.3-.3.8-.3 1.1 0l3.3 3.2c.3.3.3.8 0 1.1L5.3 9.7c-.2.2-.4.3-.6.3Z'/></svg><svg style='position:absolute;left:105.97px;top:1371.04px;' width='27.56' height='27.56' viewBox='0 0 16 16' fill='#68a7f4'><path d='M1.75 1A1.75 1.75 0 0 0 0 2.75v10.5C0 14.216.784 15 1.75 15h12.5A1.75 1.75 0 0 0 16 13.25v-8.5A1.75 1.75 0 0 0 14.25 3H7.5a.25.25 0 0 1-.2-.1l-.9-1.2C6.07 1.26 5.55 1 5 1H1.75Z'/></svg><svg style='position:absolute;left:61.23px;top:1457.98px;' width='19.44' height='19.44' viewBox='0 0 12 12' fill='#5a5f66'><path d='M4.7 10c-.2 0-.4-.1-.5-.2-.3-.3-.3-.8 0-1.1L6.9 6 4.2 3.3c-.3-.3-.3-.8 0-1.1.3-.3.8-.3 1.1 0l3.3 3.2c.3.3.3.8 0 1.1L5.3 9.7c-.2.2-.4.3-.6.3Z'/></svg><svg style='position:absolute;left:105.97px;top:1453.89px;' width='27.56' height='27.56' viewBox='0 0 16 16' fill='#68a7f4'><path d='M1.75 1A1.75 1.75 0 0 0 0 2.75v10.5C0 14.216.784 15 1.75 15h12.5A1.75 1.75 0 0 0 16 13.25v-8.5A1.75 1.75 0 0 0 14.25 3H7.5a.25.25 0 0 1-.2-.1l-.9-1.2C6.07 1.26 5.55 1 5 1H1.75Z'/></svg><svg style='position:absolute;left:61.23px;top:1540.83px;' width='19.44' height='19.44' viewBox='0 0 12 12' fill='#5a5f66'><path d='M4.7 10c-.2 0-.4-.1-.5-.2-.3-.3-.3-.8 0-1.1L6.9 6 4.2 3.3c-.3-.3-.3-.8 0-1.1.3-.3.8-.3 1.1 0l3.3 3.2c.3.3.3.8 0 1.1L5.3 9.7c-.2.2-.4.3-.6.3Z'/></svg><svg style='position:absolute;left:105.97px;top:1536.74px;' width='27.56' height='27.56' viewBox='0 0 16 16' fill='#68a7f4'><path d='M1.75 1A1.75 1.75 0 0 0 0 2.75v10.5C0 14.216.784 15 1.75 15h12.5A1.75 1.75 0 0 0 16 13.25v-8.5A1.75 1.75 0 0 0 14.25 3H7.5a.25.25 0 0 1-.2-.1l-.9-1.2C6.07 1.26 5.55 1 5 1H1.75Z'/></svg><svg style='position:absolute;left:105.68px;top:1619.38px;' width='28.00' height='28.00' viewBox='0 0 16 16' fill='#5a5f66'><path d='M2 1.75C2 .784 2.784 0 3.75 0h6.586c.464 0 .909.184 1.237.513l2.914 2.914c.329.328.513.773.513 1.237v9.586A1.75 1.75 0 0 1 13.25 16h-9.5A1.75 1.75 0 0 1 2 14.25Zm1.75-.25a.25.25 0 0 0-.25.25v12.5c0 .138.112.25.25.25h9.5a.25.25 0 0 0 .25-.25V6h-2.75A1.75 1.75 0 0 1 9 4.25V1.5Zm6.75.062V4.25c0 .138.112.25.25.25h2.688l-.011-.013-2.914-2.914-.013-.011Z'/></svg><svg style='position:absolute;left:39.53px;top:1706.53px;' width='19.44' height='19.44' viewBox='0 0 12 12' fill='#5a5f66'><path d='M4.7 10c-.2 0-.4-.1-.5-.2-.3-.3-.3-.8 0-1.1L6.9 6 4.2 3.3c-.3-.3-.3-.8 0-1.1.3-.3.8-.3 1.1 0l3.3 3.2c.3.3.3.8 0 1.1L5.3 9.7c-.2.2-.4.3-.6.3Z'/></svg><svg style='position:absolute;left:84.27px;top:1702.44px;' width='27.56' height='27.56' viewBox='0 0 16 16' fill='#68a7f4'><path d='M1.75 1A1.75 1.75 0 0 0 0 2.75v10.5C0 14.216.784 15 1.75 15h12.5A1.75 1.75 0 0 0 16 13.25v-8.5A1.75 1.75 0 0 0 14.25 3H7.5a.25.25 0 0 1-.2-.1l-.9-1.2C6.07 1.26 5.55 1 5 1H1.75Z'/></svg><svg style='position:absolute;left:39.53px;top:1789.38px;' width='19.44' height='19.44' viewBox='0 0 12 12' fill='#5a5f66'><path d='M4.7 10c-.2 0-.4-.1-.5-.2-.3-.3-.3-.8 0-1.1L6.9 6 4.2 3.3c-.3-.3-.3-.8 0-1.1.3-.3.8-.3 1.1 0l3.3 3.2c.3.3.3.8 0 1.1L5.3 9.7c-.2.2-.4.3-.6.3Z'/></svg><svg style='position:absolute;left:84.27px;top:1785.29px;' width='27.56' height='27.56' viewBox='0 0 16 16' fill='#68a7f4'><path d='M1.75 1A1.75 1.75 0 0 0 0 2.75v10.5C0 14.216.784 15 1.75 15h12.5A1.75 1.75 0 0 0 16 13.25v-8.5A1.75 1.75 0 0 0 14.25 3H7.5a.25.25 0 0 1-.2-.1l-.9-1.2C6.07 1.26 5.55 1 5 1H1.75Z'/></svg><svg style='position:absolute;left:1132.88px;top:300.82px;' width='28.15' height='28.15' viewBox='0 0 16 16' fill='#5a5f66'><path d='M0 6.75C0 5.784.784 5 1.75 5h1.5a.75.75 0 0 1 0 1.5h-1.5a.25.25 0 0 0-.25.25v7.5c0 .138.112.25.25.25h7.5a.25.25 0 0 0 .25-.25v-1.5a.75.75 0 0 1 1.5 0v1.5A1.75 1.75 0 0 1 9.25 16h-7.5A1.75 1.75 0 0 1 0 14.25Z M5 1.75C5 .784 5.784 0 6.75 0h7.5C15.216 0 16 .784 16 1.75v7.5A1.75 1.75 0 0 1 14.25 11h-7.5A1.75 1.75 0 0 1 5 9.25Zm1.75-.25a.25.25 0 0 0-.25.25v7.5c0 .138.112.25.25.25h7.5a.25.25 0 0 0 .25-.25v-7.5a.25.25 0 0 0-.25-.25Z'/></svg><div style='position:absolute;left:1975.30px;top:287.20px;width:167.10px;height:55.50px;box-sizing:border-box;border:1.75px solid #d5d8dc;border-radius:10.5px;background:#eff2f5;'></div><svg style='position:absolute;left:2092.10px;top:302.02px;' width='29.10' height='29.10' viewBox='0 0 16 16' fill='#1f2328'><path d='m4.427 7.427 3.396 3.396a.25.25 0 0 0 .354 0l3.396-3.396A.25.25 0 0 0 11.396 7H4.604a.25.25 0 0 0-.177.427Z'/></svg><div style='position:absolute;left:2157.00px;top:287.20px;width:55.50px;height:55.50px;box-sizing:border-box;border:1.75px solid #d5d8dc;border-radius:10.5px;background:#f6f8fa;'></div><div style='position:absolute;left:2170.30px;top:311.10px;width:5.80px;height:5.80px;background:#5a5f66;border-radius:50%'></div><div style='position:absolute;left:2181.80px;top:311.10px;width:5.80px;height:5.80px;background:#5a5f66;border-radius:50%'></div><div style='position:absolute;left:2193.30px;top:311.10px;width:5.80px;height:5.80px;background:#5a5f66;border-radius:50%'></div><div style='position:absolute;left:590.20px;top:371.30px;width:1622.30px;height:78.30px;box-sizing:border-box;border:1.75px solid #d5d8dc;border-radius:10.5px'></div><div style='position:absolute;left:612.40px;top:392.40px;width:38.00px;height:38.00px;box-sizing:border-box;background:#f2f2f2;border:1.5px solid #dcdcdc;border-radius:50%'></div><div style='position:absolute;left:622.41px;top:396.42px;width:5.99px;height:5.99px;background:#d476cf'></div><div style='position:absolute;left:634.40px;top:396.42px;width:5.99px;height:5.99px;background:#d476cf'></div><div style='position:absolute;left:628.40px;top:402.41px;width:5.99px;height:5.99px;background:#d476cf'></div><div style='position:absolute;left:622.41px;top:408.40px;width:5.99px;height:5.99px;background:#d476cf'></div><div style='position:absolute;left:634.40px;top:408.40px;width:5.99px;height:5.99px;background:#d476cf'></div><div style='position:absolute;left:622.41px;top:414.40px;width:5.99px;height:5.99px;background:#d476cf'></div><div style='position:absolute;left:634.40px;top:414.40px;width:5.99px;height:5.99px;background:#d476cf'></div><div style='position:absolute;left:628.40px;top:420.39px;width:5.99px;height:5.99px;background:#d476cf'></div><svg style='position:absolute;left:1133.19px;top:396.88px;' width='28.12' height='28.12' viewBox='0 0 16 16' fill='#2e7f3a'><path d='M13.78 4.22a.75.75 0 0 1 0 1.06l-7.25 7.25a.75.75 0 0 1-1.06 0L2.22 9.28a.751.751 0 0 1 .018-1.042.751.751 0 0 1 1.042-.018L6 10.94l6.72-6.72a.75.75 0 0 1 1.06 0Z'/></svg><div style='position:absolute;left:590.50px;top:478.20px;width:1621.50px;height:212.30px;box-sizing:border-box;border:1.75px solid #d5d8dc;border-radius:10.5px;overflow:hidden'></div><div style='position:absolute;left:592.00px;top:480.00px;width:1618.50px;height:68.50px;background:#f6f8fa;border-radius:9px 9px 0 0'></div><div style='position:absolute;left:590.50px;top:548.50px;width:1621.50px;height:1.50px;background:#d5d8dc'></div><div style='position:absolute;left:590.50px;top:618.50px;width:1621.50px;height:1.50px;background:#d5d8dc'></div><svg style='position:absolute;left:618.99px;top:571.04px;' width='27.63' height='27.63' viewBox='0 0 16 16' fill='#68a7f4'><path d='M1.75 1A1.75 1.75 0 0 0 0 2.75v10.5C0 14.216.784 15 1.75 15h12.5A1.75 1.75 0 0 0 16 13.25v-8.5A1.75 1.75 0 0 0 14.25 3H7.5a.25.25 0 0 1-.2-.1l-.9-1.2C6.07 1.26 5.55 1 5 1H1.75Z'/></svg><svg style='position:absolute;left:618.80px;top:640.48px;' width='29.25' height='29.25' viewBox='0 0 16 16' fill='#5a5f66'><path d='M2 1.75C2 .784 2.784 0 3.75 0h6.586c.464 0 .909.184 1.237.513l2.914 2.914c.329.328.513.773.513 1.237v9.586A1.75 1.75 0 0 1 13.25 16h-9.5A1.75 1.75 0 0 1 2 14.25Zm1.75-.25a.25.25 0 0 0-.25.25v12.5c0 .138.112.25.25.25h9.5a.25.25 0 0 0 .25-.25V6h-2.75A1.75 1.75 0 0 1 9 4.25V1.5Zm6.75.062V4.25c0 .138.112.25.25.25h2.688l-.011-.013-2.914-2.914-.013-.011Z'/></svg>
<div style='position:absolute;left:728.54px;top:25.30px;font-size:34px;font-weight:700;line-height:1;color:#e8e8e8;white-space:nowrap;will-change:transform;transform:scaleX(0.9621);transform-origin:0 0;'>github.com</div><div style='position:absolute;left:186.70px;top:125.90px;font-size:28px;font-weight:400;line-height:1;color:#1f2328;white-space:nowrap;will-change:transform;transform:scaleX(1.0076);transform-origin:0 0;'>shadowjexample-jpg</div><div style='position:absolute;left:462.90px;top:125.90px;font-size:28px;font-weight:400;line-height:1;color:#5a5f66;white-space:nowrap;will-change:transform;transform:scaleX(0.7625);transform-origin:0 0;'>/</div><div style='position:absolute;left:490.59px;top:125.90px;font-size:28px;font-weight:400;line-height:1;color:#1f2328;white-space:nowrap;will-change:transform;-webkit-text-stroke:0.9px #1f2328;transform:scaleX(1.0142);transform-origin:0 0;'>myhome</div><div style='position:absolute;left:1330.90px;top:125.70px;font-size:28px;font-weight:400;line-height:1;color:#5a5f66;white-space:nowrap;will-change:transform;transform:scaleX(0.9679);transform-origin:0 0;'>Type</div><div style='position:absolute;left:1432.10px;top:125.70px;font-size:28px;font-weight:400;line-height:1;color:#5a5f66;white-space:nowrap;will-change:transform;transform:scaleX(1.0070);transform-origin:0 0;'>to search</div><div style='position:absolute;left:83.72px;top:203.10px;font-size:28px;font-weight:400;line-height:1;color:#1f2328;white-space:nowrap;will-change:transform;-webkit-text-stroke:0.9px #1f2328;transform:scaleX(0.9776);transform-origin:0 0;'>Code</div><div style='position:absolute;left:232.96px;top:203.10px;font-size:28px;font-weight:400;line-height:1;color:#1f2328;white-space:nowrap;will-change:transform;transform:scaleX(1.0177);transform-origin:0 0;'>Issues</div><div style='position:absolute;left:399.98px;top:203.10px;font-size:28px;font-weight:400;line-height:1;color:#1f2328;white-space:nowrap;will-change:transform;transform:scaleX(1.0122);transform-origin:0 0;'>Pull requests</div><div style='position:absolute;left:651.00px;top:203.10px;font-size:28px;font-weight:400;line-height:1;color:#1f2328;white-space:nowrap;will-change:transform;transform:scaleX(1.0185);transform-origin:0 0;'>Actions</div><div style='position:absolute;left:829.75px;top:203.10px;font-size:28px;font-weight:400;line-height:1;color:#1f2328;white-space:nowrap;will-change:transform;transform:scaleX(1.0240);transform-origin:0 0;'>Projects</div><div style='position:absolute;left:1019.20px;top:203.10px;font-size:28px;font-weight:400;line-height:1;color:#1f2328;white-space:nowrap;will-change:transform;transform:scaleX(0.9966);transform-origin:0 0;'>Security</div><div style='position:absolute;left:1205.91px;top:203.10px;font-size:28px;font-weight:400;line-height:1;color:#1f2328;white-space:nowrap;will-change:transform;transform:scaleX(1.0439);transform-origin:0 0;'>Insights</div><div style='position:absolute;left:1391.48px;top:203.10px;font-size:28px;font-weight:400;line-height:1;color:#1f2328;white-space:nowrap;will-change:transform;transform:scaleX(1.0235);transform-origin:0 0;'>Settings</div><div style='position:absolute;left:97.64px;top:300.00px;font-size:31.5px;font-weight:400;line-height:1;color:#1f2328;white-space:nowrap;will-change:transform;-webkit-text-stroke:0.9px #1f2328;transform:scaleX(1.0289);transform-origin:0 0;'>Files</div><div style='position:absolute;left:92.27px;top:385.00px;font-size:28px;font-weight:400;line-height:1;color:#1f2328;white-space:nowrap;will-change:transform;-webkit-text-stroke:0.9px #1f2328;transform:scaleX(1.0324);transform-origin:0 0;'>main</div><div style='position:absolute;left:85.51px;top:455.60px;font-size:28px;font-weight:400;line-height:1;color:#5a5f66;white-space:nowrap;will-change:transform;transform:scaleX(0.9893);transform-origin:0 0;'>Go to file</div><div style='position:absolute;left:495.3px;top:460.21px;font-family:"Liberation Mono",monospace;font-size:23px;line-height:1;color:#1f2328;white-space:nowrap;will-change:transform'>t</div><div style='position:absolute;left:125.57px;top:545.12px;font-size:28px;font-weight:400;line-height:1;color:#1f2328;white-space:nowrap;will-change:transform;transform:scaleX(1.0289);transform-origin:0 0;'>content</div><div style='position:absolute;left:147.38px;top:627.98px;font-size:28px;font-weight:400;line-height:1;color:#1f2328;white-space:nowrap;will-change:transform;transform:scaleX(1.0197);transform-origin:0 0;'>all</div><div style='position:absolute;left:147.39px;top:710.83px;font-size:28px;font-weight:400;line-height:1;color:#1f2328;white-space:nowrap;will-change:transform;transform:scaleX(1.0120);transform-origin:0 0;'>beginning</div><div style='position:absolute;left:147.38px;top:793.67px;font-size:28px;font-weight:400;line-height:1;color:#1f2328;white-space:nowrap;will-change:transform;transform:scaleX(1.0167);transform-origin:0 0;'>commentary</div><div style='position:absolute;left:147.37px;top:876.52px;font-size:28px;font-weight:400;line-height:1;color:#1f2328;white-space:nowrap;will-change:transform;transform:scaleX(1.0278);transform-origin:0 0;'>economics</div><div style='position:absolute;left:168.79px;top:959.38px;font-size:28px;font-weight:400;line-height:1;color:#1f2328;white-space:nowrap;will-change:transform;transform:scaleX(0.9875);transform-origin:0 0;'>_index.md</div><div style='position:absolute;left:147.37px;top:1042.22px;font-size:28px;font-weight:400;line-height:1;color:#1f2328;white-space:nowrap;will-change:transform;transform:scaleX(1.0277);transform-origin:0 0;'>humanities</div><div style='position:absolute;left:168.79px;top:1125.08px;font-size:28px;font-weight:400;line-height:1;color:#1f2328;white-space:nowrap;will-change:transform;transform:scaleX(0.9875);transform-origin:0 0;'>_index.md</div><div style='position:absolute;left:147.35px;top:1207.92px;font-size:28px;font-weight:400;line-height:1;color:#1f2328;white-space:nowrap;will-change:transform;transform:scaleX(1.0496);transform-origin:0 0;'>list</div><div style='position:absolute;left:147.40px;top:1290.77px;font-size:28px;font-weight:400;line-height:1;color:#1f2328;white-space:nowrap;will-change:transform;transform:scaleX(1.0030);transform-origin:0 0;'>personal</div><div style='position:absolute;left:147.35px;top:1373.62px;font-size:28px;font-weight:400;line-height:1;color:#1f2328;white-space:nowrap;will-change:transform;transform:scaleX(1.0528);transform-origin:0 0;'>politics</div><div style='position:absolute;left:147.40px;top:1456.47px;font-size:28px;font-weight:400;line-height:1;color:#1f2328;white-space:nowrap;will-change:transform;transform:scaleX(1.0030);transform-origin:0 0;'>psychology</div><div style='position:absolute;left:147.40px;top:1539.33px;font-size:28px;font-weight:400;line-height:1;color:#1f2328;white-space:nowrap;will-change:transform;'>reading-notes</div><div style='position:absolute;left:148.39px;top:1622.17px;font-size:28px;font-weight:400;line-height:1;color:#1f2328;white-space:nowrap;will-change:transform;transform:scaleX(0.9875);transform-origin:0 0;'>_index.md</div><div style='position:absolute;left:125.59px;top:1705.02px;font-size:28px;font-weight:400;line-height:1;color:#1f2328;white-space:nowrap;will-change:transform;transform:scaleX(1.0079);transform-origin:0 0;'>layouts</div><div style='position:absolute;left:126.60px;top:1787.88px;font-size:28px;font-weight:400;line-height:1;color:#1f2328;white-space:nowrap;will-change:transform;transform:scaleX(1.0329);transform-origin:0 0;'>static</div><div style='position:absolute;left:588.10px;top:299.90px;font-size:31.5px;font-weight:400;line-height:1;color:#2a67d3;white-space:nowrap;will-change:transform;-webkit-text-stroke:0.9px #2a67d3;transform:scaleX(1.0485);transform-origin:0 0;'>myhome</div><div style='position:absolute;left:729.90px;top:299.90px;font-size:31.5px;font-weight:400;line-height:1;color:#5a5f66;white-space:nowrap;will-change:transform;transform:scaleX(1.2778);transform-origin:0 0;'>/</div><div style='position:absolute;left:755.96px;top:299.90px;font-size:31.5px;font-weight:400;line-height:1;color:#2a67d3;white-space:nowrap;will-change:transform;transform:scaleX(1.0412);transform-origin:0 0;'>content</div><div style='position:absolute;left:879.80px;top:299.90px;font-size:31.5px;font-weight:400;line-height:1;color:#5a5f66;white-space:nowrap;will-change:transform;transform:scaleX(1.2444);transform-origin:0 0;'>/</div><div style='position:absolute;left:904.88px;top:299.90px;font-size:31.5px;font-weight:400;line-height:1;color:#1f2328;white-space:nowrap;will-change:transform;-webkit-text-stroke:0.9px #1f2328;transform:scaleX(1.0590);transform-origin:0 0;'>humanities</div><div style='position:absolute;left:1081.50px;top:299.90px;font-size:31.5px;font-weight:400;line-height:1;color:#5a5f66;white-space:nowrap;will-change:transform;transform:scaleX(1.1667);transform-origin:0 0;'>/</div><div style='position:absolute;left:1997.00px;top:301.20px;font-size:28px;font-weight:400;line-height:1;color:#1f2328;white-space:nowrap;will-change:transform;-webkit-text-stroke:0.9px #1f2328;transform:scaleX(1.0235);transform-origin:0 0;'>Add file</div><div style='position:absolute;left:663.50px;top:395.50px;font-size:28px;font-weight:400;line-height:1;color:#1f2328;white-space:nowrap;will-change:transform;-webkit-text-stroke:0.9px #1f2328;transform:scaleX(1.0221);transform-origin:0 0;'>shadowjexample-jpg</div><div style='position:absolute;left:936.70px;top:395.50px;font-size:28px;font-weight:400;line-height:1;color:#5a5f66;white-space:nowrap;will-change:transform;transform:scaleX(1.0515);transform-origin:0 0;'>Initial commit</div><div style='position:absolute;left:1803.20px;top:397.30px;font-size:24.5px;font-weight:400;line-height:1;color:#5a5f66;white-space:nowrap;will-change:transform;'>a1b2c3d · 2 hours ago</div><div style='position:absolute;left:2101.91px;top:397.60px;font-size:24.5px;font-weight:400;line-height:1;color:#1f2328;white-space:nowrap;will-change:transform;-webkit-text-stroke:1.0px #1f2328;transform:scaleX(1.0456);transform-origin:0 0;'>History</div><div style='position:absolute;left:616.98px;top:502.20px;font-size:24.5px;font-weight:400;line-height:1;color:#5a5f66;white-space:nowrap;will-change:transform;-webkit-text-stroke:1.0px #5a5f66;transform:scaleX(1.0107);transform-origin:0 0;'>Name</div><div style='position:absolute;left:1265.67px;top:501.90px;font-size:24.5px;font-weight:400;line-height:1;color:#5a5f66;white-space:nowrap;will-change:transform;-webkit-text-stroke:1.0px #5a5f66;transform:scaleX(1.0129);transform-origin:0 0;'>Last commit message</div><div style='position:absolute;left:1999.71px;top:501.90px;font-size:24.5px;font-weight:400;line-height:1;color:#5a5f66;white-space:nowrap;will-change:transform;-webkit-text-stroke:1.0px #5a5f66;transform:scaleX(0.9948);transform-origin:0 0;'>Last commit d…</div><div style='position:absolute;left:662.34px;top:569.50px;font-size:28px;font-weight:400;line-height:1;color:#1f2328;white-space:nowrap;will-change:transform;transform:scaleX(0.9305);transform-origin:0 0;'>. .</div><div style='position:absolute;left:665.19px;top:640.40px;font-size:28px;font-weight:400;line-height:1;color:#1f2328;white-space:nowrap;will-change:transform;transform:scaleX(0.9851);transform-origin:0 0;'>_index.md</div><div style='position:absolute;left:1265.59px;top:640.90px;font-size:28px;font-weight:400;line-height:1;color:#5a5f66;white-space:nowrap;will-change:transform;transform:scaleX(1.0527);transform-origin:0 0;'>Initial commit</div><div style='position:absolute;left:2035.00px;top:640.90px;font-size:28px;font-weight:400;line-height:1;color:#5a5f66;white-space:nowrap;will-change:transform;transform:scaleX(1.0047);transform-origin:0 0;'>2 hours ago</div>
<div style='position:absolute;left:1806.60px;top:348.90px;width:336.30px;height:142.50px;background:#ffffff;border-radius:21px;box-shadow:0 0 0 1.5px rgba(209,217,224,0.35),0 14px 42px rgba(66,74,83,0.16),0 2px 5px rgba(31,35,40,0.10)'></div><svg style='position:absolute;left:1835.22px;top:378.47px;' width='27.62' height='27.62' viewBox='0 0 16 16' fill='#5a5f66'><path d='M7.75 2a.75.75 0 0 1 .75.75V7h4.25a.75.75 0 0 1 0 1.5H8.5v4.25a.75.75 0 0 1-1.5 0V8.5H2.75a.75.75 0 0 1 0-1.5H7V2.75A.75.75 0 0 1 7.75 2Z'/></svg><svg style='position:absolute;left:1835.24px;top:436.27px;' width='26.61' height='26.61' viewBox='0 0 16 16' fill='#5a5f66'><path d='M2.75 14A1.75 1.75 0 0 1 1 12.25v-2.5a.75.75 0 0 1 1.5 0v2.5c0 .138.112.25.25.25h10.5a.25.25 0 0 0 .25-.25v-2.5a.75.75 0 0 1 1.5 0v2.5A1.75 1.75 0 0 1 13.25 14Z M11.78 4.72a.749.749 0 0 1-1.06 1.06L8.75 3.811V9.5a.75.75 0 0 1-1.5 0V3.811L5.28 5.78a.749.749 0 0 1-1.06-1.06l3.25-3.25a.749.749 0 0 1 1.06 0l3.25 3.25Z'/></svg>
<div style='position:absolute;left:1876.81px;top:378.60px;font-size:28px;font-weight:400;line-height:1;color:#1f2328;white-space:nowrap;will-change:transform;transform:scaleX(0.9893);transform-origin:0 0;'>Create new file</div><div style='position:absolute;left:1875.78px;top:434.30px;font-size:28px;font-weight:400;line-height:1;color:#1f2328;white-space:nowrap;will-change:transform;transform:scaleX(1.0084);transform-origin:0 0;'>Upload files</div>
</div>
<div style='position:absolute;left:2244.5px;top:903.8px;width:6.4px;height:6.4px;border-radius:50%;background:#d4d4d4'></div><div style='position:absolute;left:2244.5px;top:920.8px;width:6.4px;height:6.4px;border-radius:50%;background:#d4d4d4'></div><div style='position:absolute;left:2244.5px;top:937.8px;width:6.4px;height:6.4px;border-radius:50%;background:#d4d4d4'></div>
</body></html>
